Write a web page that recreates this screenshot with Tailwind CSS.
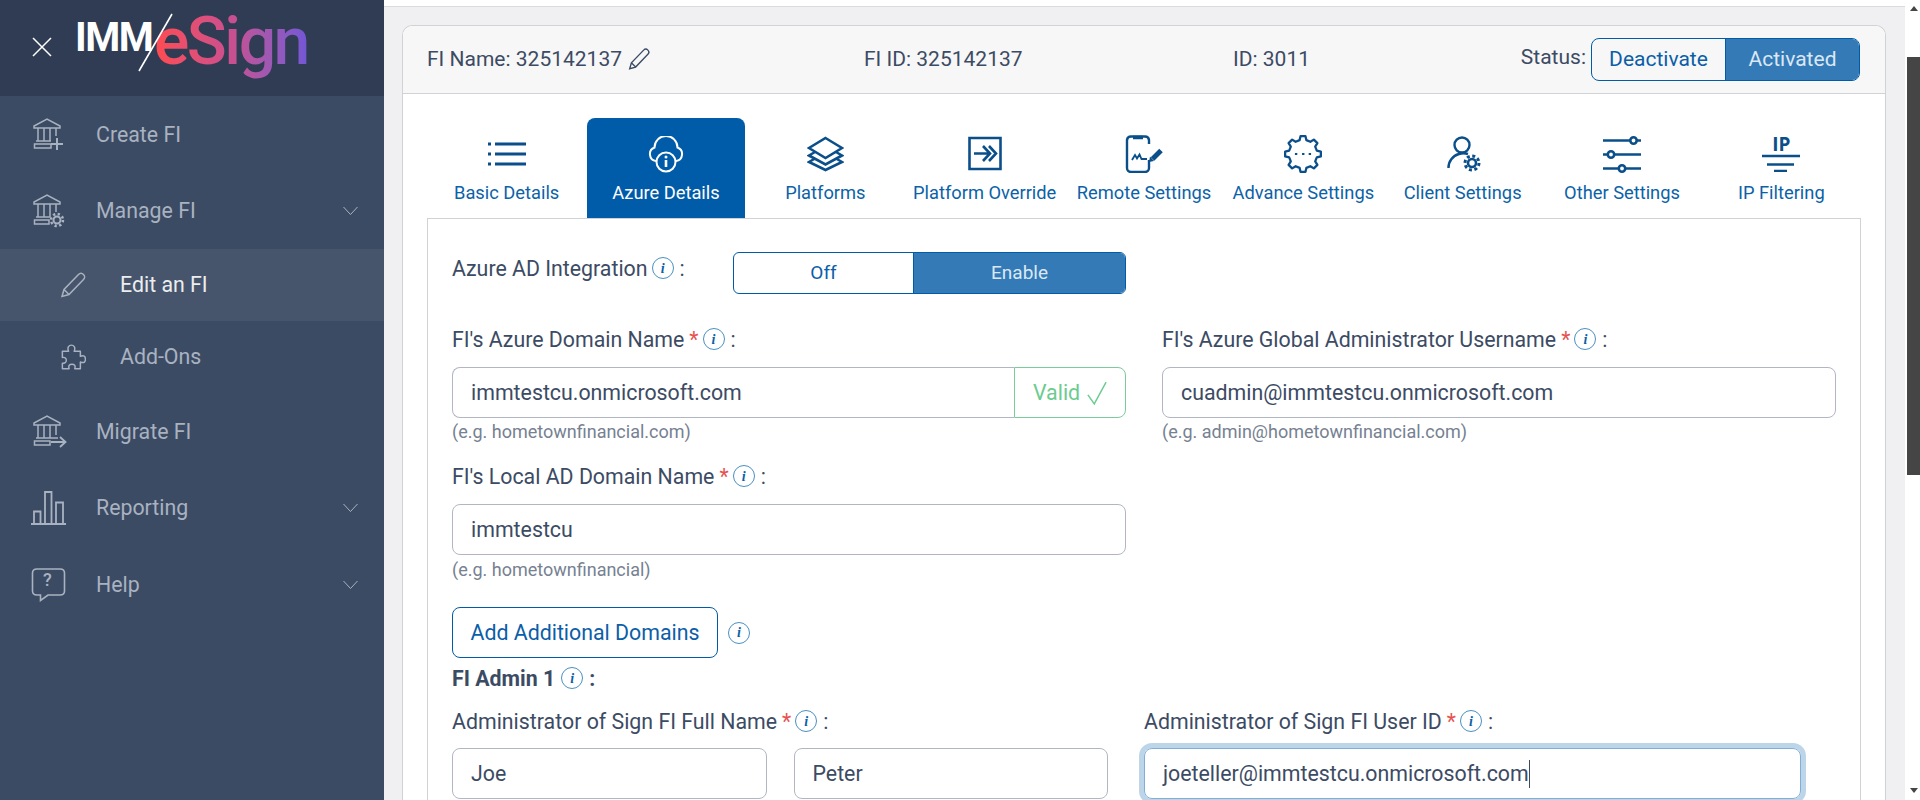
<!DOCTYPE html>
<html lang="en">
<head>
<meta charset="utf-8">
<title>IMM eSign - Edit an FI</title>
<script src="https://cdn.jsdelivr.net/npm/@tailwindcss/browser@4"></script>
</head>
<body class="font-['Roboto',sans-serif] h-screen overflow-hidden">
<div class="flex h-[800px] overflow-hidden">
  <!-- Sidebar -->
  <aside class="w-[384px] shrink-0 bg-[#3c4b64] text-[21.33px] text-[#a9b2c0]">
    <div class="h-[96px] bg-[#303c54] relative">
      <svg class="absolute left-[32px] top-[37px]" width="20" height="20" viewBox="0 0 20 20" fill="none" stroke="#fff" stroke-width="1.5"><path d="M1 1L19 19M19 1L1 19"/></svg>
      <span class="absolute left-[75px] top-[14px] text-[40px] leading-[48px] font-bold tracking-[-1.5px] text-white">IMM</span>
      <span class="absolute left-[154px] top-[3px] text-[66px] leading-[78px] font-medium tracking-[-2.5px] bg-gradient-to-r from-[#ff4a4f] via-[#c94f8f] to-[#7256d6] bg-clip-text text-transparent">eSign</span>
      <svg class="absolute left-[136px] top-[12px]" width="40" height="62" viewBox="0 0 40 62" fill="none" stroke="#fff" stroke-width="1.6"><path d="M36 2L3 59"/></svg>
    </div>
    <nav>
      <a class="flex items-center h-[77px]">
        <span class="w-[96px] shrink-0 pl-[33px]">
          <svg class="block" width="34" height="34" viewBox="0 0 34 34" fill="none" stroke="#a9b2c0" stroke-width="1.5"><path d="M1 10V8L14 1L27 8V10ZM5 10V23M11 10V23M17 10V23M23 10V18M3 23H18M1.500 26H18V30H1.500Z"/><path d="M24 20V32M18 26H30" stroke-width="2"/></svg>
        </span>
        <span>Create FI</span>
      </a>
      <a class="flex items-center h-[76px]">
        <span class="w-[96px] shrink-0 pl-[33px]">
          <svg class="block" width="34" height="34" viewBox="0 0 34 34" fill="none" stroke="#a9b2c0" stroke-width="1.5"><path d="M1 10V8L14 1L27 8V10ZM5 10V23M11 10V23M17 10V23M23 10V18M3 23H17M1.500 26H16V30H1.500Z"/><circle cx="24" cy="26" r="3.500" stroke-width="2"/><circle cx="24" cy="26" r="6" stroke-width="2.500" stroke-dasharray="2.300 2.400"/></svg>
        </span>
        <span class="flex-1">Manage FI</span>
        <svg class="mr-[26px]" width="15" height="10" viewBox="0 0 15 10" fill="none" stroke="#a9b2c0"><path d="M.5 1L7.500 8.500L14.500 1"/></svg>
      </a>
      <a class="flex items-center h-[72px] bg-[#46556b] text-[#ebedef]">
        <span class="w-[120px] shrink-0 pl-[60px]">
          <svg class="block" width="26" height="26" viewBox="0 0 26 26" fill="none" stroke="#a9b2c0" stroke-width="1.500"><path d="M2 24.500L4 17.500L18.500 2.500C20 1 22 1 23.500 2.500C25 4 25 6 23.500 7.500L9 22.500ZM4 17.500L9 22.500"/></svg>
        </span>
        <span>Edit an FI</span>
      </a>
      <a class="flex items-center h-[72px]">
        <span class="w-[120px] shrink-0 pl-[59px]">
          <svg class="block" width="27" height="27" viewBox="0 0 24 24" fill="none" stroke="#a9b2c0" stroke-width="1.300" stroke-linejoin="round"><path d="M3 6.500H8.500C7 2.500 9 1 11 1S15 2.500 13.500 6.500H19V11C22.500 9.500 23.500 11.500 23.500 13.500S22.500 17.500 19 16V22H14C15 19 13.500 18 11.500 18S8 19 9 22H3V17C5.500 17.500 6.500 16 6.500 14.500S5.500 11.500 3 12Z"/></svg>
        </span>
        <span>Add-Ons</span>
      </a>
      <a class="flex items-center h-[77px]">
        <span class="w-[96px] shrink-0 pl-[33px]">
          <svg class="block" width="34" height="34" viewBox="0 0 34 34" fill="none" stroke="#a9b2c0" stroke-width="1.5"><path d="M1 10V8L14 1L27 8V10ZM5 10V23M11 10V23M17 10V23M23 10V20M3 23H25M1.500 26H17V30H1.500Z"/><path d="M18 27H32M27 22L32.500 27L27 32" stroke-width="1.800"/></svg>
        </span>
        <span>Migrate FI</span>
      </a>
      <a class="flex items-center h-[76px]">
        <span class="w-[96px] shrink-0 pl-[31px]">
          <svg class="block" width="35" height="34" viewBox="0 0 35 34" fill="none" stroke="#a9b2c0" stroke-width="1.800"><path d="M0 33H35M3 33V20.500H9.500V33M14 33V1H20.500V33M25 33V11.500H32V33"/></svg>
        </span>
        <span class="flex-1">Reporting</span>
        <svg class="mr-[26px]" width="15" height="10" viewBox="0 0 15 10" fill="none" stroke="#a9b2c0"><path d="M.5 1L7.500 8.500L14.500 1"/></svg>
      </a>
      <a class="flex items-center h-[77px]">
        <span class="w-[96px] shrink-0 pl-[31px] relative">
          <svg class="block" width="35" height="34" viewBox="0 0 35 34" fill="none" stroke="#a9b2c0" stroke-width="1.600"><path d="M6 1H29Q33.500 1 33.500 5V23Q33.500 27 29 27H17L9.500 32.500V27H6Q1.500 27 1.500 23V5Q1.500 1 6 1Z"/></svg>
          <span class="absolute left-[43px] top-[2px] text-[18px] leading-[20px] font-medium">?</span>
        </span>
        <span class="flex-1">Help</span>
        <svg class="mr-[26px]" width="15" height="10" viewBox="0 0 15 10" fill="none" stroke="#a9b2c0"><path d="M.5 1L7.500 8.500L14.500 1"/></svg>
      </a>
    </nav>
  </aside>

  <!-- Main -->
  <main class="flex-1 min-w-0 bg-[#f0f0f2] text-[21.33px] text-[#3c4b64] overflow-hidden">
    <div class="h-[7px] bg-white border-b border-[#d8dbe0]"></div>
    <div class="ml-[18px] mr-[19px] mt-[18px] bg-white border border-b-0 border-[#d0d2d6] rounded-t-[10px] h-[780px]">
      <!-- Card header -->
      <div class="h-[68px] bg-[#f7f7f7] border-b border-[#d0d2d6] rounded-t-[10px] flex items-center pl-[24px] pr-[25px] text-[21px]">
        <div class="w-[437px] flex items-center gap-[6px]">
          <span>FI Name: 325142137</span>
          <svg class="mb-[2px]" width="22" height="22" viewBox="0 0 26 26" fill="none" stroke="#3c4b64" stroke-width="1.600"><path d="M2 24.500L4 17.500L18.500 2.500C20 1 22 1 23.500 2.500C25 4 25 6 23.500 7.500L9 22.500ZM4 17.500L9 22.500"/></svg>
        </div>
        <div class="w-[369px]">FI ID: 325142137</div>
        <div class="flex-1">ID: 3011</div>
        <span class="mr-[5px] mb-[3px]">Status:</span>
        <div class="flex w-[269px] h-[43px] rounded-[8px] border border-[#005ca9] overflow-hidden shrink-0">
          <span class="w-[134px] flex items-center justify-center text-[#0b5ea8] border-r border-[#005ca9]">Deactivate</span>
          <span class="flex-1 flex items-center justify-center bg-[#337ab7] text-[#dbe8f4]">Activated</span>
        </div>
      </div>
      <!-- Card body -->
      <div class="pl-[24px] pr-[24px] pt-[24px]">
        <!-- Tabs -->
        <div class="grid grid-cols-9 h-[100px] text-center text-[#0b62a8] text-[18.3px] leading-[24px]">
          <div class="mx-[1px] flex flex-col items-center pt-[16px]">
            <div class="h-[40px] flex items-center justify-center">
              <svg class="block" width="38" height="24" viewBox="0 0 38 24" fill="none" stroke="#0a4f8a" stroke-width="3"><path d="M0 2H3M7 2H38M0 12H3M7 12H38M0 22H3M7 22H38"/></svg>
            </div>
            <span class="mt-[7px]">Basic Details</span>
          </div>
          <div class="mx-[1px] flex flex-col items-center pt-[16px] bg-[#005ca9] rounded-t-[8px] text-white">
            <div class="h-[40px] flex items-center justify-center">
              <svg class="block" width="38" height="37" viewBox="0 0 38 37" fill="none" stroke="#fff" stroke-width="2"><path d="M9 25A7 7 0 0 1 7.500 11.500A11.500 11.500 0 0 1 30.500 11.500A7 7 0 0 1 29 25"/><circle cx="19" cy="26" r="9.500" fill="#005ca9"/><path d="M19 24V31" stroke-width="2.600"/><circle cx="19" cy="21" r="1.500" fill="#fff" stroke="none"/></svg>
            </div>
            <span class="mt-[7px]">Azure Details</span>
          </div>
          <div class="mx-[1px] flex flex-col items-center pt-[16px]">
            <div class="h-[40px] flex items-center justify-center">
              <svg class="block" width="37" height="36" viewBox="0 0 37 36" fill="none" stroke="#0a4f8a" stroke-width="2.600"><path d="M18.500 2L35 12L18.500 22L2 12ZM8 16L2 19.500L18.500 28.500L35 19.500L29 16M8 22.500L2 26L18.500 34L35 26L29 22.500"/></svg>
            </div>
            <span class="mt-[7px]">Platforms</span>
          </div>
          <div class="mx-[1px] flex flex-col items-center pt-[16px]">
            <div class="h-[40px] flex items-center justify-center">
              <svg class="block" width="34" height="36" viewBox="0 0 34 36" fill="none" stroke="#0a4f8a" stroke-width="2.600"><path d="M1.500 2H32.500V33H1.500ZM6 17.500H21M15 10L22 17.500L15 25M21 10L28 17.500L21 25"/></svg>
            </div>
            <span class="mt-[7px]">Platform Override</span>
          </div>
          <div class="mx-[1px] flex flex-col items-center pt-[16px]">
            <div class="h-[40px] flex items-center justify-center">
              <svg class="block" width="38" height="38" viewBox="0 0 38 38" fill="none" stroke="#0a4f8a" stroke-width="2.400"><path d="M24 9V5A4 4 0 0 0 20 1.500H6A4 4 0 0 0 2 5V33A4 4 0 0 0 6 37H20A4 4 0 0 0 24 33V25"/><path d="M8 2.500H18" stroke-width="3.500"/><path d="M7 25L10 20L12 23.500L14.500 19.500L16.500 24H22" stroke-width="1.800"/><path d="M36 15.500L27.500 24" stroke-width="5"/><path d="M25 21.500L24 27L29 26Z" fill="#0a4f8a" stroke="none"/></svg>
            </div>
            <span class="mt-[7px]">Remote Settings</span>
          </div>
          <div class="mx-[1px] flex flex-col items-center pt-[16px]">
            <div class="h-[40px] flex items-center justify-center">
              <svg class="block" width="40" height="38" viewBox="0 0 40 40" fill="none" stroke="#0a4f8a" stroke-width="2.400" stroke-linejoin="round"><path d="M16.400 5.450L17.400 1.200H22.600L23.600 5.450L27.720 7.150L31.430 4.840L35.160 8.570L32.850 12.280L34.550 16.400L38.800 17.400V22.600L34.550 23.600L32.850 27.720L35.160 31.430L31.430 35.160L27.720 32.850L23.600 34.550L22.600 38.800H17.400L16.400 34.550L12.280 32.850L8.570 35.160L4.840 31.430L7.150 27.720L5.450 23.600L1.200 22.600V17.400L5.450 16.400L7.150 12.280L4.840 8.570L8.570 4.840L12.280 7.150Z"/><path d="M11.500 20H14M19 20H21.500M26 20H28.500" stroke-width="2.200"/></svg>
            </div>
            <span class="mt-[7px]">Advance Settings</span>
          </div>
          <div class="mx-[1px] flex flex-col items-center pt-[16px]">
            <div class="h-[40px] flex items-center justify-center">
              <svg class="block ml-[2px]" width="34" height="36" viewBox="0 0 34 36" fill="none" stroke="#0a4f8a" stroke-width="2.400"><circle cx="15" cy="9" r="7.500"/><path d="M1.500 32A14 14 0 0 1 12 18A14 14 0 0 1 21 18"/><circle cx="25" cy="27" r="4" stroke-width="2.600"/><circle cx="25" cy="27" r="7" stroke-width="3" stroke-dasharray="3 2.500"/></svg>
            </div>
            <span class="mt-[7px]">Client Settings</span>
          </div>
          <div class="mx-[1px] flex flex-col items-center pt-[16px]">
            <div class="h-[40px] flex items-center justify-center">
              <svg class="block" width="38" height="37" viewBox="0 0 38 37" fill="none" stroke="#0a4f8a" stroke-width="2.600"><path d="M0 4.500H38M0 18.500H38M0 32.500H38"/><circle cx="30.500" cy="4.500" r="3.200" fill="#fff"/><circle cx="8" cy="18.500" r="3.200" fill="#fff"/><circle cx="19" cy="32.500" r="3.200" fill="#fff"/></svg>
            </div>
            <span class="mt-[7px]">Other Settings</span>
          </div>
          <div class="mx-[1px] flex flex-col items-center pt-[16px]">
            <div class="h-[40px] flex flex-col items-center">
              <span class="h-[20px] text-[19px] leading-[20px] font-bold text-[#0a4f8a] font-['Open_Sans',sans-serif]">IP</span>
              <svg class="block" width="38" height="18" viewBox="0 0 38 18" fill="none" stroke="#0a4f8a" stroke-width="2.400"><path d="M0 2H38M5 10.500H32M12 17H25"/></svg>
            </div>
            <span class="mt-[7px]">IP Filtering</span>
          </div>
        </div>
        <!-- Form box -->
        <div class="border border-[#d0d2d6] h-[600px] pl-[24px] pr-[24px] pt-[33px] relative">
          <div class="flex items-start">
            <div class="w-[281px] flex items-center h-[32px] mt-[1px]">
              <span>Azure AD Integration</span>
              <span class="ml-[4px] inline-flex items-center justify-center w-[22px] h-[22px] rounded-full border border-[#4a90c2] text-[#0b5fa5] italic font-bold text-[14px] font-['Liberation_Serif',serif] mb-[2px]">i</span>
              <span class="ml-[6px]">:</span>
            </div>
            <div class="flex w-[393px] h-[42px] rounded-[6px] border border-[#005ca9] overflow-hidden">
              <span class="w-[180px] flex items-center justify-center text-[#0b5ea8] text-[19px] border-r border-[#005ca9]">Off</span>
              <span class="flex-1 flex items-center justify-center bg-[#337ab7] text-[#dbe8f4] text-[19px]">Enable</span>
            </div>
          </div>

          <div class="grid grid-cols-[674px_674px] gap-x-[36px] mt-[34px]">
            <div>
              <label class="flex items-center h-[24px]">FI's Azure Domain Name<span class="text-[#e55353] ml-[5px]">*</span><span class="ml-[4px] inline-flex items-center justify-center w-[22px] h-[22px] rounded-full border border-[#4a90c2] text-[#0b5fa5] italic font-bold text-[14px] font-['Liberation_Serif',serif] mb-[2px]">i</span><span class="ml-[6px]">:</span></label>
              <div class="flex mt-[15px] h-[51px]">
                <input readonly value="immtestcu.onmicrosoft.com" class="flex-1 min-w-0 pl-[18px] bg-white text-[#3c4b64] outline-none border border-r-0 border-[#b1b7c1] rounded-l-[8px]">
                <span class="w-[112px] flex items-center pl-[18px] gap-[7px] border border-[#7ccb9a] rounded-r-[8px] text-[#6ccb90]">Valid
                  <svg width="20" height="26" viewBox="0 0 22 26" fill="none" stroke="#6ccb90" stroke-width="1.600"><path d="M1 15L8 25L21 1"/></svg>
                </span>
              </div>
              <div class="mt-[4px] text-[18px] leading-[20px] text-[#768192]">(e.g. hometownfinancial.com)</div>
            </div>
            <div>
              <label class="flex items-center h-[24px]">FI's Azure Global Administrator Username<span class="text-[#e55353] ml-[5px]">*</span><span class="ml-[4px] inline-flex items-center justify-center w-[22px] h-[22px] rounded-full border border-[#4a90c2] text-[#0b5fa5] italic font-bold text-[14px] font-['Liberation_Serif',serif] mb-[2px]">i</span><span class="ml-[6px]">:</span></label>
              <input readonly value="cuadmin@immtestcu.onmicrosoft.com" class="block w-full mt-[15px] h-[51px] rounded-[8px] border border-[#b1b7c1] pl-[18px] text-[#3c4b64] outline-none">
              <div class="mt-[4px] text-[18px] leading-[20px] text-[#768192]">(e.g. admin@hometownfinancial.com)</div>
            </div>
            <div class="mt-[23px]">
              <label class="flex items-center h-[24px]">FI's Local AD Domain Name<span class="text-[#e55353] ml-[5px]">*</span><span class="ml-[4px] inline-flex items-center justify-center w-[22px] h-[22px] rounded-full border border-[#4a90c2] text-[#0b5fa5] italic font-bold text-[14px] font-['Liberation_Serif',serif] mb-[2px]">i</span><span class="ml-[6px]">:</span></label>
              <input readonly value="immtestcu" class="block w-full mt-[15px] h-[51px] rounded-[8px] border border-[#b1b7c1] pl-[18px] text-[#3c4b64] outline-none">
              <div class="mt-[5px] text-[18px] leading-[20px] text-[#768192]">(e.g. hometownfinancial)</div>
            </div>
          </div>

          <div class="flex items-center mt-[27px]">
            <button class="w-[266px] h-[51px] rounded-[8px] border border-[#005ca9] text-[#0b5ea8]">Add Additional Domains</button>
            <span class="ml-[10px] inline-flex items-center justify-center w-[22px] h-[22px] rounded-full border border-[#4a90c2] text-[#0b5fa5] italic font-bold text-[14px] font-['Liberation_Serif',serif]">i</span>
          </div>
          <div class="flex items-center h-[24px] mt-[9px] font-bold">FI Admin 1<span class="ml-[6px] inline-flex items-center justify-center w-[22px] h-[22px] rounded-full border border-[#4a90c2] text-[#0b5fa5] italic font-bold text-[14px] font-['Liberation_Serif',serif] mb-[2px]">i</span><span class="ml-[6px]">:</span></div>

          <div class="grid grid-cols-[656px_657px] gap-x-[36px] mt-[19px]">
            <div>
              <label class="flex items-center h-[24px]">Administrator of Sign FI Full Name<span class="text-[#e55353] ml-[5px]">*</span><span class="ml-[4px] inline-flex items-center justify-center w-[22px] h-[22px] rounded-full border border-[#4a90c2] text-[#0b5fa5] italic font-bold text-[14px] font-['Liberation_Serif',serif] mb-[2px]">i</span><span class="ml-[6px]">:</span></label>
              <div class="grid grid-cols-2 gap-x-[27px] mt-[14px]">
                <input readonly value="Joe" class="block w-full h-[51px] rounded-[8px] border border-[#b1b7c1] pl-[18px] text-[#3c4b64] outline-none">
                <input readonly value="Peter" class="block w-full h-[51px] rounded-[8px] border border-[#b1b7c1] pl-[18px] text-[#3c4b64] outline-none">
              </div>
            </div>
            <div>
              <label class="flex items-center h-[24px]">Administrator of Sign FI User ID<span class="text-[#e55353] ml-[5px]">*</span><span class="ml-[4px] inline-flex items-center justify-center w-[22px] h-[22px] rounded-full border border-[#4a90c2] text-[#0b5fa5] italic font-bold text-[14px] font-['Liberation_Serif',serif] mb-[2px]">i</span><span class="ml-[6px]">:</span></label>
              <div class="flex items-center mt-[14px] h-[51px] rounded-[8px] border border-[#80aed6] shadow-[0_0_0_5px_#bdd5e9] pl-[18px]">joeteller@immtestcu.onmicrosoft.com<span class="inline-block w-[1px] h-[28px] bg-[#3c4b64]"></span></div>
            </div>
          </div>
        </div>
      </div>
    </div>
  </main>

  <!-- Scrollbar -->
  <div class="w-[15px] shrink-0 bg-white relative">
    <span class="absolute left-[5px] top-[6px] w-0 h-0 border-x-[4px] border-x-transparent border-b-[5px] border-b-[#454545]"></span>
    <div class="ml-[2px] mt-[57px] h-[418px] bg-[#454545]"></div>
    <span class="absolute left-[5px] bottom-[7px] w-0 h-0 border-x-[4px] border-x-transparent border-t-[5px] border-t-[#454545]"></span>
  </div>
</div>
</body>
</html>
